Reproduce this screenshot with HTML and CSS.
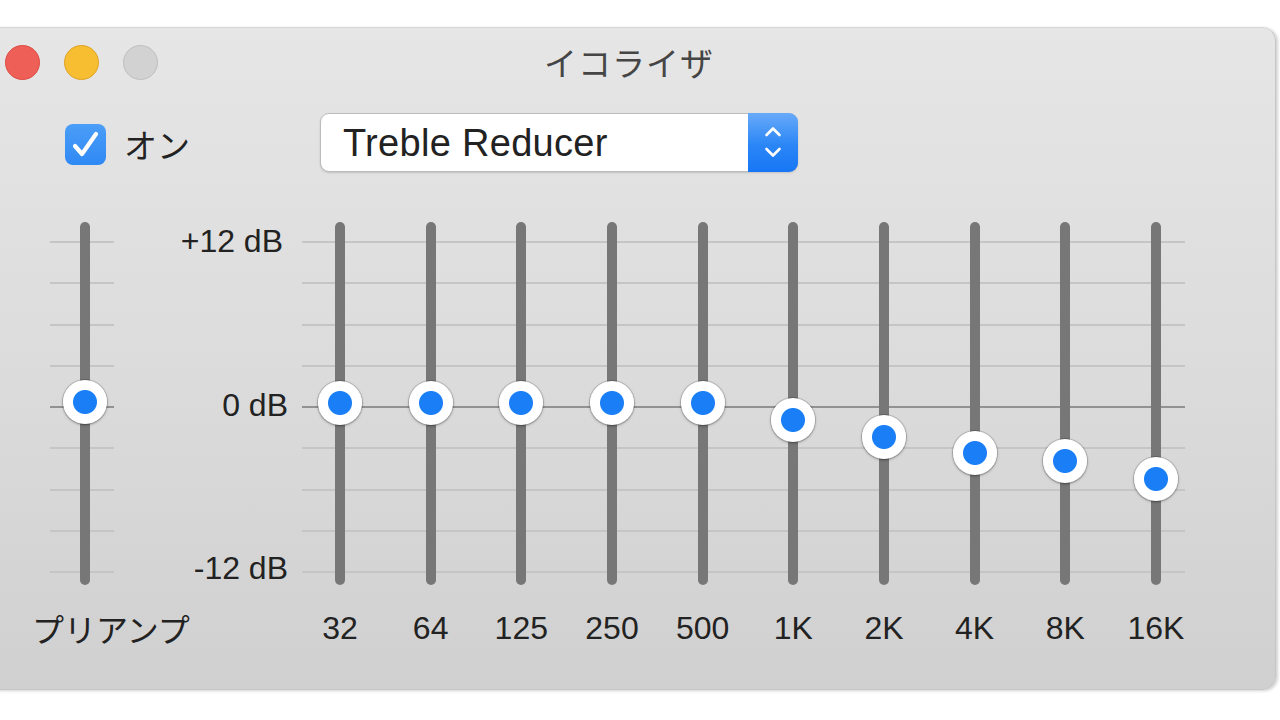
FILE: index.html
```html
<!DOCTYPE html>
<html lang="ja">
<head>
<meta charset="utf-8">
<title>イコライザ</title>
<link rel="stylesheet" href="styles.css">
</head>
<body>
<div class="window">
  <div class="titlebar">
    <div class="lights">
      <span class="light red"></span>
      <span class="light yellow"></span>
      <span class="light gray"></span>
    </div>
    <div class="title">イコライザ</div>
    <div></div>
  </div>

  <div class="controls">
    <div class="toggle">
      <span class="checkbox"><svg width="41" height="41" viewBox="0 0 41 41"><polyline points="10,22 17,30 31,10" fill="none" stroke="#fff" stroke-width="4.2" stroke-linecap="round" stroke-linejoin="round"/></svg></span>
      <span class="toggle-text">オン</span>
    </div>
    <div class="select">
      <span class="select-value">Treble Reducer</span>
      <span class="select-arrows"><svg width="50" height="57" viewBox="0 0 50 57"><polyline points="18.5,21 25,14.5 31.5,21" fill="none" stroke="#fff" stroke-width="2.6" stroke-linecap="round" stroke-linejoin="round"/><polyline points="18.5,35 25,41.5 31.5,35" fill="none" stroke="#fff" stroke-width="2.6" stroke-linecap="round" stroke-linejoin="round"/></svg></span>
    </div>
  </div>

  <div class="eq">
    <div class="slot preamp">
      <div class="lines">
        <i class="line"></i><i class="line"></i><i class="line"></i><i class="line"></i><i class="line zero"></i><i class="line"></i><i class="line"></i><i class="line"></i><i class="line"></i>
      </div>
      <div class="slider"><span class="track"></span><span class="knob" style="top:158px"></span></div>
    </div>

    <div class="scale">
      <span class="scale-top">+12 dB</span>
      <span>0 dB</span>
      <span>-12 dB</span>
    </div>

    <div class="slot bands">
      <div class="lines band-lines">
        <i class="line"></i><i class="line"></i><i class="line"></i><i class="line"></i><i class="line zero"></i><i class="line"></i><i class="line"></i><i class="line"></i><i class="line"></i>
      </div>
      <div class="band-tracks">
        <div class="slider"><span class="track"></span><span class="knob" style="top:159px"></span></div>
        <div class="slider"><span class="track"></span><span class="knob" style="top:159px"></span></div>
        <div class="slider"><span class="track"></span><span class="knob" style="top:159px"></span></div>
        <div class="slider"><span class="track"></span><span class="knob" style="top:159px"></span></div>
        <div class="slider"><span class="track"></span><span class="knob" style="top:159px"></span></div>
        <div class="slider"><span class="track"></span><span class="knob" style="top:176px"></span></div>
        <div class="slider"><span class="track"></span><span class="knob" style="top:193px"></span></div>
        <div class="slider"><span class="track"></span><span class="knob" style="top:209px"></span></div>
        <div class="slider"><span class="track"></span><span class="knob" style="top:217px"></span></div>
        <div class="slider"><span class="track"></span><span class="knob" style="top:235px"></span></div>
      </div>
    </div>

    <div class="preamp-label">プリアンプ</div>
    <div></div>
    <div class="band-labels">
      <span>32</span><span>64</span><span>125</span><span>250</span><span>500</span><span>1K</span><span>2K</span><span>4K</span><span>8K</span><span>16K</span>
    </div>
  </div>
</div>
</body>
</html>
```

FILE: styles.css
```css
* { box-sizing: border-box; }

html, body {
  margin: 0;
  height: 720px;
  overflow: hidden;
  background: #ffffff;
}

body {
  padding-top: 27px;
  font-family: "Liberation Sans", "Noto Sans CJK JP", sans-serif;
  color: #222222;
}

.window {
  margin-left: -14px;
  width: 1290px;
  height: 663px;
  border: 1px solid #c6c6c6;
  border-top-color: #d6d6d6;
  border-radius: 14px;
  background: linear-gradient(to bottom, #e6e6e6 0%, #dcdcdc 50%, #d0d0d0 100%);
  box-shadow: 2px 1px 3px rgba(0, 0, 0, 0.18);
}

/* title bar */
.titlebar {
  height: 68px;
  display: grid;
  grid-template-columns: 1fr auto 1fr;
  align-items: center;
}

.lights {
  display: flex;
  gap: 24px;
  padding-left: 18px;
}

.light {
  width: 35px;
  height: 35px;
  border-radius: 50%;
  display: block;
}

.light.red { background: #ee5f58; border: 1px solid #dc4a42; }
.light.yellow { background: #f6be30; border: 1px solid #dfa326; }
.light.gray { background: #d2d2d2; border: 1px solid #bfbfbf; }

.title {
  font-family: "Noto Sans CJK JP", sans-serif;
  font-size: 33px;
  color: #454545;
  letter-spacing: 1px;
  margin-right: 4px;
}

/* controls */
.controls {
  margin-top: 17px;
  height: 59px;
  display: flex;
  align-items: center;
  padding-left: 78px;
}

.toggle {
  width: 255px;
  display: flex;
  align-items: center;
  padding-top: 3px;
}

.checkbox {
  width: 41px;
  height: 41px;
  border-radius: 8px;
  background: linear-gradient(to bottom, #4b9ef8, #2f89f4);
  display: block;
}

.checkbox svg { display: block; }

.toggle-text {
  margin-left: 18px;
  font-family: "Noto Sans CJK JP", sans-serif;
  font-size: 33px;
  color: #222;
}

.select {
  width: 478px;
  height: 59px;
  display: flex;
  align-items: center;
  background: #ffffff;
  border: 1px solid #bcbcbc;
  border-radius: 9px;
  box-shadow: 0 1px 2px rgba(0, 0, 0, 0.15);
}

.select-value {
  flex: 1;
  padding-left: 22px;
  font-size: 38px;
  letter-spacing: 0.3px;
  color: #222;
  padding-top: 2px;
}

.select-arrows {
  width: 50px;
  height: 59px;
  margin: -1px -1px -1px 0;
  border-radius: 0 9px 9px 0;
  background: linear-gradient(to bottom, #68aaf9 0%, #2a86f6 55%, #1776f5 100%);
  display: flex;
  align-items: center;
}

.select-arrows svg { display: block; }

/* equalizer */
.eq {
  margin-top: 50px;
  margin-left: 63px;
  display: grid;
  grid-template-columns: 64px 180.67px 906.67px;
  grid-template-rows: 363px auto;
}

.slot {
  display: grid;
}

.lines {
  grid-area: 1 / 1;
  margin-top: 19px;
  height: 332px;
  display: flex;
  flex-direction: column;
  justify-content: space-between;
}

.band-lines {
  margin-left: 7.33px;
  margin-right: 16.33px;
}

.line {
  display: block;
  height: 2px;
  background: #c5c5c5;
}

.line.zero { background: #929292; }

.preamp .slider {
  grid-area: 1 / 1;
  justify-self: start;
  margin-left: 30px;
}

.band-tracks {
  grid-area: 1 / 1;
  display: grid;
  grid-template-columns: repeat(10, 1fr);
  justify-items: center;
}

.slider {
  position: relative;
  width: 10px;
  height: 363px;
}

.track {
  display: block;
  width: 10px;
  height: 100%;
  border-radius: 5px;
  background: #777777;
}

.knob {
  position: absolute;
  left: 50%;
  width: 44px;
  height: 44px;
  margin-left: -22px;
  border-radius: 50%;
  background: radial-gradient(circle, #1a7ff7 0, #1a7ff7 11.5px, #ffffff 12.5px);
  box-shadow: 0 0 0 1px rgba(0, 0, 0, 0.14), 0 1px 3px rgba(0, 0, 0, 0.35);
}

.scale {
  height: 363px;
  display: flex;
  flex-direction: column;
  justify-content: space-between;
  align-items: flex-end;
  padding-right: 6.67px;
  font-size: 32px;
  line-height: 34px;
  padding-top: 2px;
}

.scale-top { margin-right: 5px; }

.preamp-label {
  margin-top: 25px;
  margin-left: -18px;
  white-space: nowrap;
  font-family: "Noto Sans CJK JP", sans-serif;
  font-size: 32px;
  line-height: 36px;
}

.band-labels {
  margin-top: 25px;
  display: grid;
  grid-template-columns: repeat(10, 1fr);
  justify-items: center;
  font-size: 32px;
  line-height: 36px;
}
```
